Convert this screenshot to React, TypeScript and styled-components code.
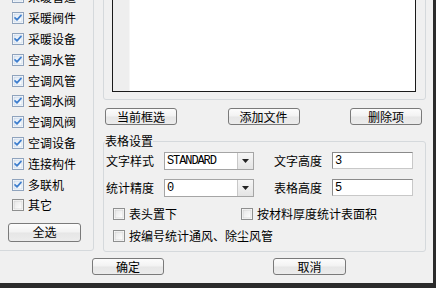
import React from "react";
import styled, { createGlobalStyle } from "styled-components";

const Global = createGlobalStyle`
  html, body { margin: 0; padding: 0; background: #f0f0f0; }
  body {
    font-family: "Noto Sans CJK SC", "Noto Sans", sans-serif;
    font-size: 12px;
    color: #000;
  }
`;

const Window = styled.div`
  width: 436px;
  height: 288px;
  box-sizing: border-box;
  overflow: hidden;
  background: #f0f0f0;
  border-right: 3px solid #2b2b2b;
  border-bottom: 5px solid #2b2b2b;
  display: flex;
  flex-direction: column;
`;

const Main = styled.div`
  display: flex;
  align-items: flex-start;
  gap: 9px;
  margin-top: -24px;
`;

const LeftGroup = styled.div`
  box-sizing: border-box;
  width: 100px;
  margin-left: -6px;
  border: 1px solid #d5d9dc;
  border-radius: 3px;
  padding: 10px 0 8px 13px;
  display: flex;
  flex-direction: column;
`;

const CheckItem = styled.label<{ $h?: number }>`
  display: flex;
  align-items: center;
  height: ${(p) => p.$h ?? 20.8}px;
  white-space: nowrap;
  line-height: 1;
`;

const LeftItem = styled(CheckItem)`
  padding-left: 4px;
`;

const Box = styled.span`
  display: inline-flex;
  width: 12px;
  height: 12px;
  margin-right: 4px;
  flex: none;
`;

const Button = styled.button<{ $w?: number; $h?: number }>`
  box-sizing: border-box;
  width: ${(p) => p.$w ?? 72}px;
  height: ${(p) => p.$h ?? 17}px;
  padding: 0;
  border: 1px solid #7a7a7a;
  border-radius: 3px;
  background: linear-gradient(#fcfcfc, #f2f2f2 48%, #e6e6e6 52%, #ececec);
  font-family: "Noto Sans CJK SC", "Noto Sans", sans-serif;
  font-size: 12px;
  line-height: 1;
  color: #000;
  display: flex;
  align-items: center;
  justify-content: center;
`;

const SelectAll = styled(Button)`
  margin-top: 7.2px;
`;

const RightColumn = styled.div`
  width: 323px;
  display: flex;
  flex-direction: column;
`;

const ListGroup = styled.div`
  box-sizing: border-box;
  border: 1px solid #d5d9dc;
  border-radius: 3px;
  padding: 10px 9px 7px 8px;
`;

const ListBox = styled.div`
  box-sizing: border-box;
  width: 304px;
  height: 105px;
  border: 1px solid #1a1a1a;
  background: #fff;
  display: flex;
`;

const Gutter = styled.div`
  width: 16px;
  background: #eeeeee;
  border-right: 1px solid #f6f6f6;
`;

const ButtonRow = styled.div`
  margin-top: 8px;
  padding: 0 4px 0 2px;
  display: flex;
  justify-content: space-between;
`;

const TableGroup = styled.fieldset`
  margin: 8px 0 0;
  padding: 2px 0 7px 2px;
  border: 1px solid #d5d9dc;
  border-radius: 3px;
  min-inline-size: 0;
`;

const Legend = styled.legend`
  padding: 0;
  margin-left: -1px;
  height: 16px;
  line-height: 16px;
`;

const FormRow = styled.div<{ $mt?: number }>`
  display: flex;
  align-items: center;
  height: 19px;
  margin-top: ${(p) => p.$mt ?? 0}px;
`;

const FieldLabel = styled.span<{ $ml?: number }>`
  width: 58px;
  margin-left: ${(p) => p.$ml ?? 0}px;
  white-space: nowrap;
  line-height: 1;
`;

const Combo = styled.div`
  box-sizing: border-box;
  width: 90px;
  height: 18px;
  border: 1px solid #a5a5a5;
  background: #fff;
  display: flex;
  align-items: stretch;
`;

const MonoText = styled.span`
  flex: 1;
  padding-left: 2px;
  font-family: "Liberation Mono", monospace;
  font-size: 12px;
  letter-spacing: -1.1px;
  display: flex;
  align-items: center;
`;

const DropButton = styled.span`
  width: 15px;
  border-left: 1px solid #c8c8c8;
  background: linear-gradient(#f6f6f6, #e4e4e4);
  display: flex;
  align-items: center;
  justify-content: center;
`;

const Input = styled.div`
  box-sizing: border-box;
  width: 81px;
  height: 17px;
  border: 1px solid #8a8a8a;
  border-right-color: #c8c8c8;
  border-bottom-color: #c8c8c8;
  background: #fff;
  padding-left: 2px;
  font-family: "Liberation Mono", monospace;
  font-size: 12px;
  display: flex;
  align-items: center;
`;

const OptionGrid = styled.div<{ $mt: number }>`
  display: grid;
  grid-template-columns: 128px auto;
  padding-left: 7px;
  margin-top: ${(p) => p.$mt}px;
`;

const Footer = styled.div`
  margin-top: 6px;
  padding-left: 92px;
  display: flex;
  gap: 109px;
`;

function Check({ checked }: { checked: boolean }) {
  return (
    <Box>
      <svg width="12" height="12" viewBox="0 0 12 12">
        <defs>
          <linearGradient id={checked ? "cbOn" : "cbOff"} x1="0" y1="0" x2="1" y2="1">
            <stop offset="0" stopColor={checked ? "#dfe9f5" : "#e6e6e6"} />
            <stop offset="1" stopColor="#ffffff" />
          </linearGradient>
        </defs>
        <rect x="0.5" y="0.5" width="11" height="11" fill="#fff" stroke={checked ? "#8fa3bd" : "#8e8f8f"} />
        <rect x="2" y="2" width="8" height="8" fill={`url(#${checked ? "cbOn" : "cbOff"})`} stroke={checked ? "#b9cbe2" : "#c9c9c9"} strokeWidth="0.6" />
        {checked && (
          <path d="M3 5.8 L5 7.9 L9 3.4" fill="none" stroke="#3f7fce" strokeWidth="1.7" strokeLinecap="round" strokeLinejoin="round" />
        )}
      </svg>
    </Box>
  );
}

function Arrow() {
  return (
    <svg width="7" height="4" viewBox="0 0 7 4">
      <path d="M0 0 H7 L3.5 4 Z" fill="#222" />
    </svg>
  );
}

const leftItems: [string, boolean][] = [
  ["采暖管道", true],
  ["采暖阀件", true],
  ["采暖设备", true],
  ["空调水管", true],
  ["空调风管", true],
  ["空调水阀", true],
  ["空调风阀", true],
  ["空调设备", true],
  ["连接构件", true],
  ["多联机", true],
  ["其它", false],
];

export default function App() {
  return (
    <>
      <Global />
      <Window>
        <Main>
          <LeftGroup>
            {leftItems.map(([label, on]) => (
              <LeftItem key={label}>
                <Check checked={on} />
                {label}
              </LeftItem>
            ))}
            <SelectAll $w={73} $h={19}>全选</SelectAll>
          </LeftGroup>
          <RightColumn>
            <ListGroup>
              <ListBox>
                <Gutter />
              </ListBox>
            </ListGroup>
            <ButtonRow>
              <Button>当前框选</Button>
              <Button>添加文件</Button>
              <Button>删除项</Button>
            </ButtonRow>
            <TableGroup>
              <Legend>表格设置</Legend>
              <FormRow>
                <FieldLabel>文字样式</FieldLabel>
                <Combo>
                  <MonoText>STANDARD</MonoText>
                  <DropButton>
                    <Arrow />
                  </DropButton>
                </Combo>
                <FieldLabel $ml={20}>文字高度</FieldLabel>
                <Input>3</Input>
              </FormRow>
              <FormRow $mt={8}>
                <FieldLabel>统计精度</FieldLabel>
                <Combo>
                  <MonoText>0</MonoText>
                  <DropButton>
                    <Arrow />
                  </DropButton>
                </Combo>
                <FieldLabel $ml={20}>表格高度</FieldLabel>
                <Input>5</Input>
              </FormRow>
              <OptionGrid $mt={8.5}>
                <CheckItem $h={16}>
                  <Check checked={false} />
                  表头置下
                </CheckItem>
                <CheckItem $h={16}>
                  <Check checked={false} />
                  按材料厚度统计表面积
                </CheckItem>
              </OptionGrid>
              <OptionGrid $mt={6.5}>
                <CheckItem $h={16}>
                  <Check checked={false} />
                  按编号统计通风、除尘风管
                </CheckItem>
              </OptionGrid>
            </TableGroup>
          </RightColumn>
        </Main>
        <Footer>
          <Button>确定</Button>
          <Button $w={73}>取消</Button>
        </Footer>
      </Window>
    </>
  );
}
